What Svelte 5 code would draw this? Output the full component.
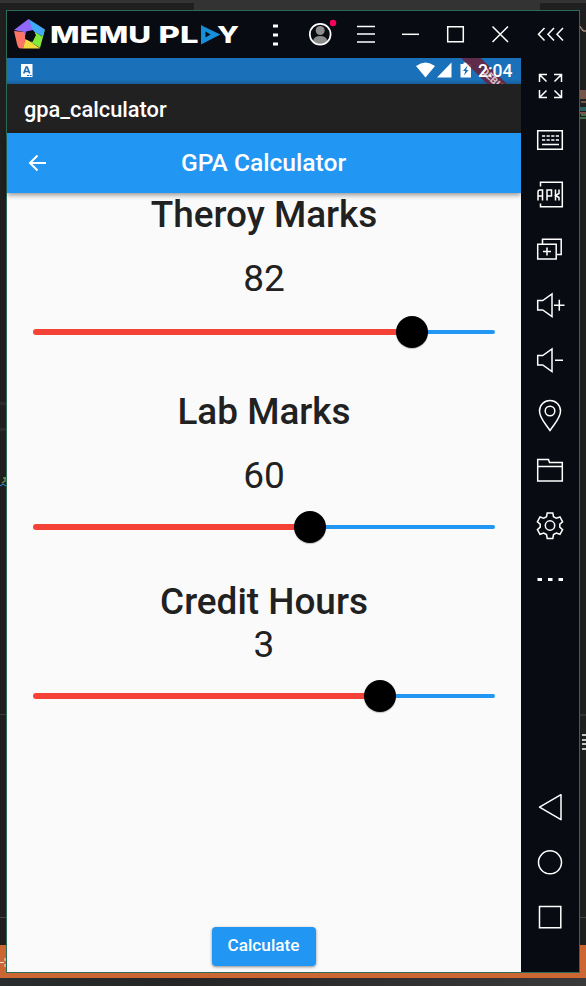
<script>
  const sections = [
    { title: 'Theroy Marks', value: 82, max: 100, kind: 'theory' },
    { title: 'Lab Marks', value: 60, max: 100, kind: 'lab' },
    { title: 'Credit Hours', value: 3, max: 4, kind: 'credit' }
  ];
</script>

<div class="desktop">
  <div class="topstrip"></div>
  <div class="toptab"></div>
  <div class="orange"></div>
  <div class="bottomstrip"></div>
  <svg class="backdrop" width="586" height="986" viewBox="0 0 586 986">
    <path d="M0 403.5H6M0 429.5H6" stroke="#2b2b2b" stroke-width="3" />
    <path d="M0 917.5H6M580 715H586M580 917.5H586" stroke="#454545" />
    <path d="M0 714.5H6" stroke="#3a3a3a" />
    <path d="M0 486l3-2 3 2" stroke="#3794ff" fill="none" />
    <path d="M2 483l3-2v-4M3 478h3" stroke="#648f4a" fill="none" stroke-width="1.5" />
    <path d="M580 27l3 4h3" stroke="#b5b5c8" fill="none" />
    <path d="M580 26l4 5h2" stroke="#a87544" fill="none" />
    <path d="M580 90h6v9h-6z" fill="#76564a" />
    <path d="M581 102h5M580 113h6" stroke="#7a5549" stroke-width="2" />
    <path d="M580 107h6v4h-6z" fill="#2f6264" />
    <path d="M581 115h5M580 118h6" stroke="#41704a" stroke-width="2" />
    <path d="M582 735h4M582 740h4M582 744h4M582 749h4" stroke="#c5c5c5" stroke-width="2" />
    <path d="M0 962.5h4M5 958v3M5 964v3" stroke="#f0e3df" />
  </svg>

  <main class="window">
    <header class="titlebar">
      <svg class="logo" width="246" height="47" viewBox="0 0 246 47">
        <path d="M7 19L21.5 8L27 20L20 21L17 28V21Z" fill="#9068fa" />
        <path d="M21.5 8L38 18.5L35.500 25.500L26 20Z" fill="#43a9fb" />
        <path d="M38 18.5L33 37L24 31L28 21L35 25.500Z" fill="#83e93b" />
        <path d="M33 37.500H16L17.500 27L24 31Z" fill="#f1dc40" />
        <path d="M7 20L17 21L19 28L16 37.500H13Q11 37 10 33Z" fill="#fb7664" />
        <path d="M19 20.500L26 19L29 24L25.500 31L18 28Z" fill="#080c12" />
        <g class="word">
          <text x="43" y="32" textLength="101" lengthAdjust="spacingAndGlyphs">MEMU</text>
          <text x="151.500" y="32" textLength="40" lengthAdjust="spacingAndGlyphs">PL</text>
          <text x="210" y="32" textLength="22" lengthAdjust="spacingAndGlyphs">Y</text>
        </g>
        <path d="M195.500 16.500L210 23.500L195.500 31Z" fill="#168fdb" stroke="#168fdb" stroke-width="3" />
        <path d="M198.500 20.500l5 3-5 3z" fill="#080c12" />
      </svg>
      <div class="controls">
        <svg viewBox="0 0 45 47"><path d="M20 13.500h5v3h-5zM20 22.500h5v3h-5zM20 31.500h5v3h-5z" fill="#fff" /></svg>
        <svg viewBox="0 0 45 47">
          <circle cx="22.200" cy="19.500" r="4.500" fill="#8c8c8c" />
          <path d="M15 30q1-5 7.200-5t7.200 5q-7 6-14.400 0" fill="#8c8c8c" />
          <circle cx="22.200" cy="23.300" r="10.400" fill="none" stroke="#fff" stroke-width="1.700" />
          <circle cx="35" cy="12" r="3.200" fill="#fb005f" />
        </svg>
        <svg viewBox="0 0 45 47"><path d="M14 15.500h18M14 23h18M14 31h18" class="line" /></svg>
        <svg viewBox="0 0 45 47"><path d="M14 23.300h17" class="line" /></svg>
        <svg viewBox="0 0 45 47"><path d="M14.700 15.700h15.600v15H14.700z" class="line" /></svg>
        <svg viewBox="0 0 45 47"><path d="M14.500 15.500l15.500 15.500M30 15.500L14.500 31" class="line" /></svg>
        <svg class="last" viewBox="0 0 54 47"><path d="M21.500 17l-6 6.300 6 6.300M31 17l-6 6.300 6 6.300M40 17l-6 6.300 6 6.300" class="line" /></svg>
      </div>
    </header>

    <div class="body">
      <section class="device">
        <div class="status">
          <svg class="badge" width="12" height="13" viewBox="0 0 12 13">
            <path d="M0 0h11.500v13H0z" fill="#fff" />
            <path d="M2.700 9.500L5.200 3h1L8.700 9.500M4 7.500h3.500" fill="none" stroke="#1a6db5" stroke-width="1.600" />
            <path d="M6 11.500h5" stroke="#1a6db5" stroke-dasharray="2 .7" />
          </svg>
          <svg class="signals" width="56" height="17" viewBox="0 0 56 17">
            <path d="M0 4Q9.500-3 19 4L9.500 15.500Z" fill="#fff" />
            <path d="M35.500 .5V15.500H21Z" fill="#fff" />
            <path d="M47.500 .5h4V2h3.500v13.500H44.500V2h3z" fill="#fff" />
            <path d="M51.500 3.500L47 9h2.300L48 13.500L52.500 8h-2.300Z" fill="#1a6db5" />
          </svg>
          <span class="time">2:04</span>
          <div class="debug">DEBUG</div>
        </div>
        <div class="taskname">gpa_calculator</div>
        <div class="appbar">
          <svg class="back" width="19" height="18" viewBox="0 0 19 18"><path d="M9.500 1.500L2 9l7.500 7.500M2 9h16" fill="none" stroke="#fff" stroke-width="2" /></svg>
          <h1>GPA Calculator</h1>
        </div>
        <div class="content">
          {#each sections as s}
            <div class="section {s.kind}">
              <h2>{s.title}</h2>
              <div class="value">{s.value}</div>
              <div class="slider">
                <div class="fill" style="width: {(s.value / s.max) * 100}%"></div>
                <div class="thumb"></div>
                <div class="rest"></div>
              </div>
            </div>
          {/each}
          <button>Calculate</button>
        </div>
      </section>

      <aside class="tools">
        <svg viewBox="0 0 58 55"><path d="M18.500 24v-7.500H26M18.500 16.500l7 7M33 16.500h7.500V24M40.500 16.500l-7 7M18.500 32v7.500H26M18.500 39.500l7-7M33 39.500h7.500V32M40.500 39.500l-7-7" class="line" /></svg>
        <svg viewBox="0 0 58 55"><path d="M16.700 17.700h24.600v18.600H16.700zM21 31.500h17" class="line" /><path d="M21 23h17M21 27h17" class="line" stroke-dasharray="3.200 1.400" /></svg>
        <svg viewBox="0 0 58 55"><path d="M19.500 18.500v-4.300h21.800v24.600H19.500V35.500" class="line" /><path d="M17 32.500v-8.500q0-2 2-2h2.500V32.500M17 28h4.500M26 32.500V22h4.500v6H26M34.500 21.500v11M38 21.500v4l-3.500 2 3.500 2v3" class="line" /></svg>
        <svg viewBox="0 0 58 55"><path d="M16.700 21.200h18.500v14.800H16.700zM21.500 20.500v-4.300h18.700V31.500H36M22 28.500h8M26 24.500v8" class="line" /></svg>
        <svg viewBox="0 0 58 55"><path d="M16.700 22.500v9.500h5L31 38.500V16L21.700 22.500zM33 27.300h10.500M38.300 21.800v11" class="line" /></svg>
        <svg viewBox="0 0 58 55"><path d="M16.700 22.500v9.500h5L31 38.500V16L21.700 22.500zM34 27.300h8" class="line" /></svg>
        <svg viewBox="0 0 58 55"><path d="M29 42.500C24 35 18.500 30 18.500 23a10.500 10.500 0 0 1 21 0C39.500 30 34 35 29 42.500Z" class="line" /><circle cx="29" cy="23" r="4.800" class="line" /></svg>
        <svg viewBox="0 0 58 55"><path d="M16.700 16.500h10.800l1 3h12.800v18.500H16.700zM16.700 23.500h24.600" class="line" /></svg>
        <svg viewBox="0 0 58 55">
          <path transform="translate(0 -.9)" d="M26.200 15.800h5.600l.7 3.800 2.800 1.600 3.700-1.300 2.600 4.800-2.800 2.400v2.900l2.800 2.500-2.600 4.700-3.700-1.300-2.800 1.600-.7 3.800h-5.600l-.7-3.800-2.800-1.600-3.700 1.300-2.600-4.700 2.800-2.500v-2.900l-2.800-2.400 2.600-4.800 3.700 1.300 2.800-1.600z" class="line" />
          <circle cx="29" cy="27.500" r="4.700" class="line" />
        </svg>
        <svg viewBox="0 0 58 55"><path d="M16.500 25h4.500v3h-4.500zM27 25h4.500v3H27zM37.500 25H42v3h-4.500z" fill="#fff" /></svg>
        <svg class="nav" viewBox="0 0 58 55"><path d="M18.500 27.200L40 14.700v25z" class="line" stroke-linejoin="round" /></svg>
        <svg viewBox="0 0 58 55"><circle cx="29" cy="27.300" r="11.500" class="line" /></svg>
        <svg viewBox="0 0 58 55"><path d="M18.500 16.500h21.300v21.300H18.500z" class="line" /></svg>
      </aside>
    </div>
  </main>
</div>

<style>
  .desktop {
    position: relative;
    width: 586px;
    height: 986px;
    padding: 10px 6px;
    box-sizing: border-box;
    overflow: hidden;
    background: #1f1f1f;
    font-family: Roboto, "Liberation Sans", sans-serif;
  }
  .topstrip, .toptab, .orange, .bottomstrip, .backdrop { position: absolute; left: 0; }
  .topstrip { top: 0; width: 586px; height: 3px; background: #333; }
  .toptab { top: 3px; left: 194px; width: 346px; height: 8px; background: #333; }
  .orange { top: 945px; width: 586px; height: 33px; background: #cc6633; }
  .bottomstrip { top: 978px; width: 586px; height: 8px; background: linear-gradient(90deg, #292d2d, #252525 30%, #393939); }
  .backdrop { top: 0; }
  .window {
    position: relative;
    width: 574px;
    height: 963px;
    box-sizing: border-box;
    border: 1px solid #2e6a58;
    background: #080c12;
    display: flex;
    flex-direction: column;
  }
  .titlebar { height: 47px; flex: none; display: flex; }
  .logo { flex: none; }
  .word { fill: #fff; font: 800 23.5px Inter, sans-serif; }
  .controls { display: flex; }
  .controls svg { width: 45px; height: 47px; }
  .controls svg.last { width: 54px; flex: none; }
  .line { fill: none; stroke: #fff; stroke-width: 1.5; }
  .body { flex: 1; display: flex; }
  .device { width: 514px; display: flex; flex-direction: column; background: #fafafa; }
  .status {
    position: relative;
    overflow: hidden;
    height: 26px;
    flex: none;
    box-sizing: border-box;
    display: flex;
    align-items: center;
    padding: 0 8px 0 14px;
    background: linear-gradient(#1a70b9 84%, #185d98);
  }
  .badge { margin-top: -1px; }
  .signals { margin-left: auto; margin-top: -1px; }
  .time { color: #fff; font-size: 17.5px; font-weight: 500; line-height: 26px; margin-left: 6px; width: 35px; position: relative; z-index: 1; }
  .debug {
    position: absolute;
    left: 423px;
    top: 12px;
    width: 120px;
    height: 14px;
    box-sizing: border-box;
    padding-left: 50px;
    line-height: 14px;
    font-size: 10px;
    font-weight: 900;
    color: #d6bcc5;
    background: rgba(107, 35, 59, .87);
    transform: rotate(45deg);
  }
  .taskname { height: 49px; flex: none; line-height: 51px; padding-left: 17px; background: #212121; color: #fff; font-size: 21.8px; font-weight: 500; }
  .appbar {
    position: relative;
    height: 60px;
    flex: none;
    display: flex;
    align-items: center;
    padding: 0 20.5px;
    background: #2196f3;
    box-shadow: 0 2px 5px rgba(0, 0, 0, .42);
  }
  h1 { flex: 1; margin: 0 20px 0 0; text-align: center; color: #fff; font-size: 24.6px; line-height: 59px; height: 60px; font-weight: 500; }
  .content { flex: 1; display: flex; flex-direction: column; align-items: center; color: #212121; }
  .section { width: 462px; text-align: center; }
  .theory { height: 197px; }
  .lab { height: 190px; }
  h2 { margin: 0; font-size: 36.9px; line-height: 43px; font-weight: 500; }
  .value { margin-top: 21px; font-size: 37px; line-height: 43px; }
  .credit .value { margin-top: 0; }
  .slider { display: flex; align-items: center; height: 32px; margin-top: 15.5px; }
  .lab .slider { margin-top: 14px; }
  .credit .slider { margin-top: 14.4px; }
  .fill { height: 6px; flex: none; border-radius: 3px 0 0 3px; background: #f44336; }
  .thumb { position: relative; width: 32px; height: 32px; flex: none; margin: 0 -16px; border-radius: 50%; background: #000; box-shadow: 0 1px 1px rgba(0, 0, 0, .25); }
  .rest { flex: 1; height: 4px; border-radius: 0 2px 2px 0; background: #2196f3; }
  button {
    margin: auto 0 6.5px;
    width: 104px;
    height: 38.5px;
    padding: 0 1px 2px 0;
    border: 0;
    border-radius: 4px;
    background: #2196f3;
    box-shadow: 0 1px 3px rgba(0, 0, 0, .45);
    color: #fff;
    font: 500 17.2px Roboto, sans-serif;
  }
  .tools { width: 58px; display: flex; flex-direction: column; }
  .tools svg { width: 58px; height: 55px; flex: none; }
  .tools svg.nav { margin-top: 172px; }
</style>
